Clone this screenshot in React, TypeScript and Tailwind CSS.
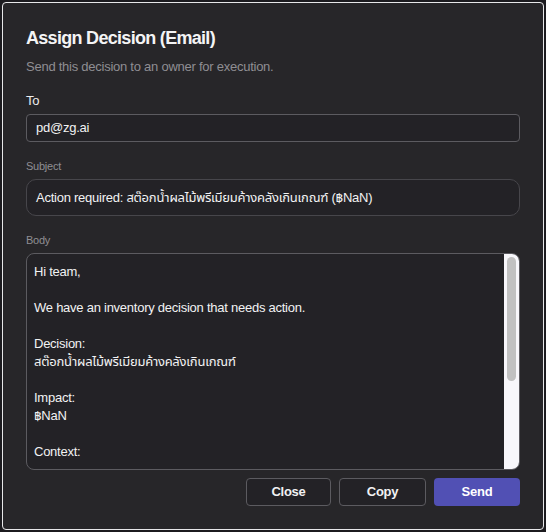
import React from 'react';

const body = [
  'Hi team,',
  '',
  'We have an inventory decision that needs action.',
  '',
  'Decision:',
  'สต๊อกน้ำผลไม้พรีเมียมค้างคลังเกินเกณฑ์',
  '',
  'Impact:',
  '฿NaN',
  '',
  'Context:',
];

export default function App() {
  return (
    <div
      className="relative h-[532px] w-[546px] overflow-hidden bg-[#1c1b1f] text-white"
      style={{ fontFamily: '"Liberation Sans", Arial, "Noto Sans Thai", "Noto Sans", sans-serif' }}
    >
      {/* Dialog */}
      <div className="absolute left-[2px] top-[2px] flex h-[528px] w-[542px] flex-col rounded-[4px] border border-[#e8e8ea] bg-[#272629] px-[23px] pt-[21px] tracking-[-0.25px]">
        <h1 className="text-[18px] font-bold leading-[28px] tracking-[-0.7px] text-[#f4f4f5]">Assign Decision (Email)</h1>
        <p className="mt-[6px] text-[13px] leading-[18px] text-[#8f8e93]">Send this decision to an owner for execution.</p>

        {/* To */}
        <label className="mt-[16px] text-[13px] leading-[18px] text-[#ececee]">To</label>
        <div className="mt-[4px] flex h-[28px] items-center rounded-[4px] border border-[#5c5b60] bg-[#232226] px-[9px] text-[13px] text-[#f2f2f3]">
          pd@zg.ai
        </div>

        {/* Subject */}
        <label className="mt-[16px] text-[11px] leading-[16px] text-[#8f8e93]">Subject</label>
        <div className="mt-[5px] flex h-[37px] items-center rounded-[10px] border border-[#47464b] bg-[#232226] px-[9px] text-[13px] text-[#f2f2f3]">
          Action required: สต๊อกน้ำผลไม้พรีเมียมค้างคลังเกินเกณฑ์ (฿NaN)
        </div>

        {/* Body */}
        <label className="mt-[16px] text-[11px] leading-[16px] text-[#8f8e93]">Body</label>
        <div className="mt-[5px] flex h-[217px] overflow-hidden rounded-[8px] border border-[#5c5b60] bg-[#232226]">
          <div className="flex-1 overflow-hidden px-[7px] pt-[9px] text-[13px] leading-[18px] text-[#f2f2f3]">
            {body.map((line, i) => (
              <div key={i} className="h-[18px] whitespace-pre">
                {line}
              </div>
            ))}
          </div>
          <div className="flex w-[15px] flex-col bg-[#f8f7fb] px-[3px] pt-[3px]">
            <div className="h-[124px] rounded-full bg-[#c1c1c1]" />
          </div>
        </div>

        {/* Actions */}
        <div className="mt-[8px] flex justify-end gap-[8px]">
          <button className="h-[28px] w-[85px] rounded-[4px] border border-[#5c5b60] bg-[#232226] text-[13px] font-bold text-[#f2f2f3]">
            Close
          </button>
          <button className="h-[28px] w-[87px] rounded-[4px] border border-[#5c5b60] bg-[#232226] text-[13px] font-bold text-[#f2f2f3]">
            Copy
          </button>
          <button className="h-[28px] w-[86px] rounded-[4px] bg-[#5150b4] text-[13px] font-bold text-white">
            Send
          </button>
        </div>
      </div>
    </div>
  );
}
